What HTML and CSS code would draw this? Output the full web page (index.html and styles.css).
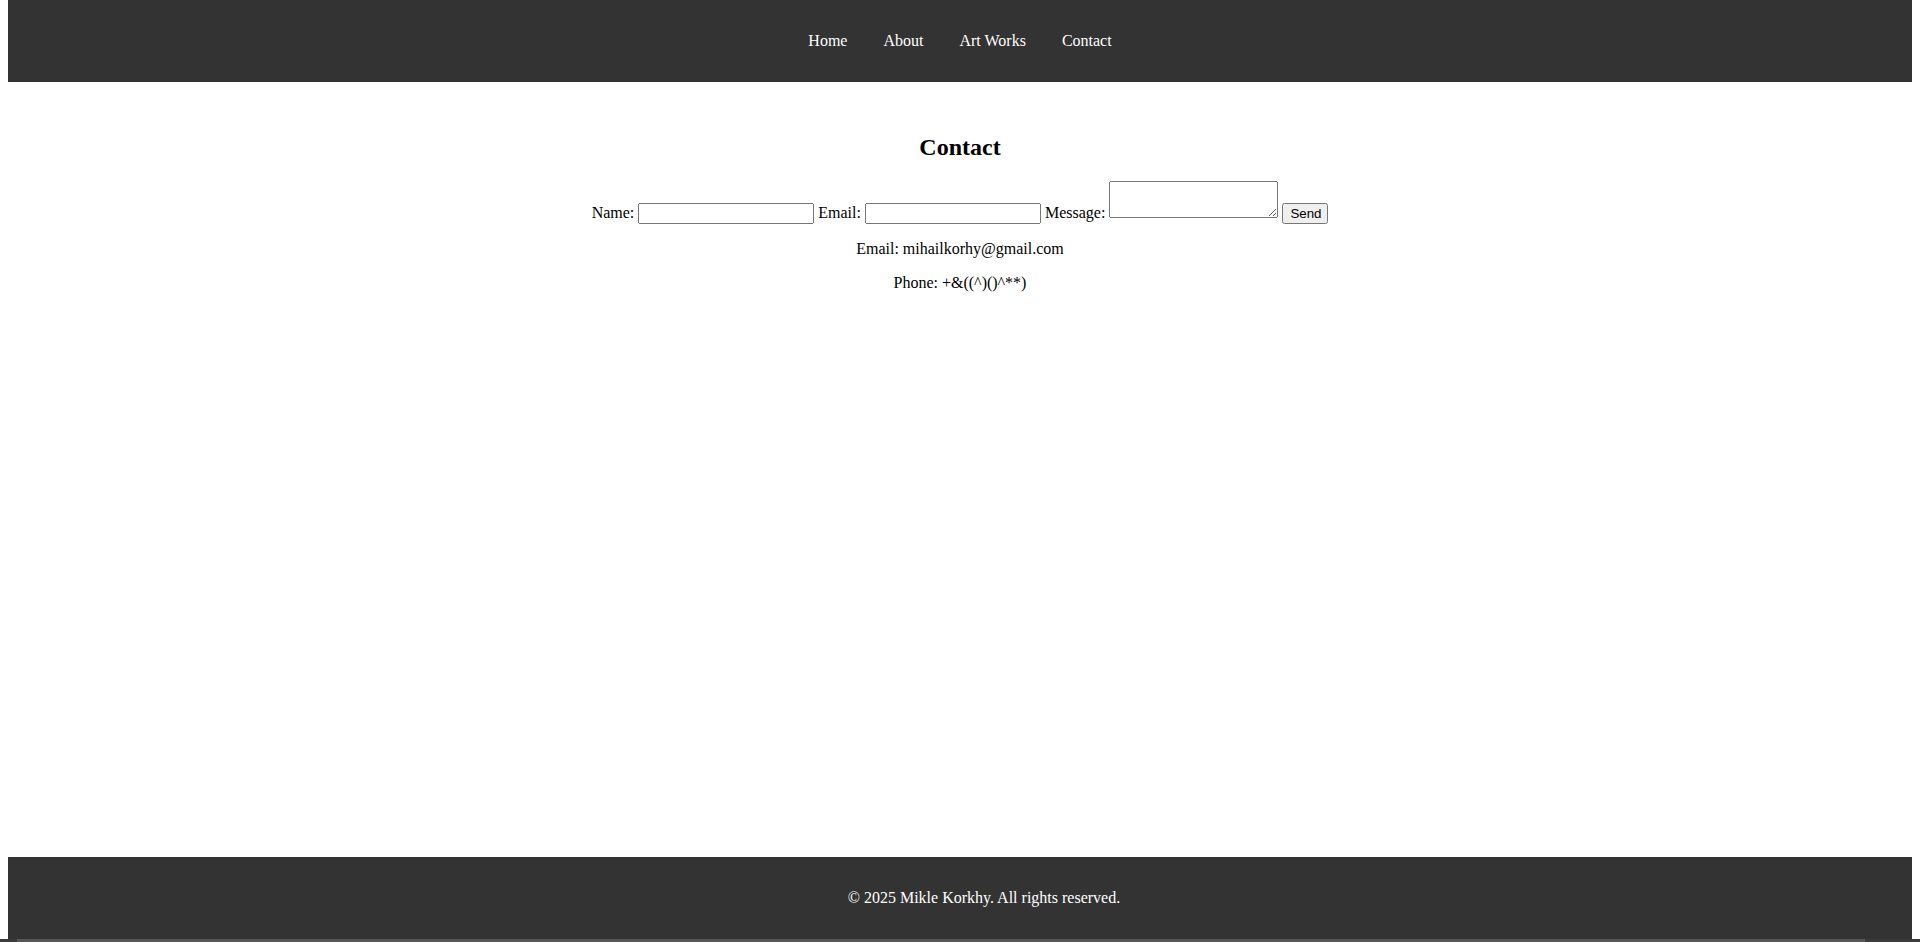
FILE: index.html
```html
<!DOCTYPE html>
<html lang="en">
<head>
<meta charset="utf-8">
<title>Contact</title>
<link rel="stylesheet" href="styles.css">
</head>
<body>
<header class="site-header">
  <nav class="nav">
    <a href="#" class="nav-link">Home</a>
    <a href="#" class="nav-link">About</a>
    <a href="#" class="nav-link">Art Works</a>
    <a href="#" class="nav-link">Contact</a>
  </nav>
</header>
<main class="content">
  <h2 class="title">Contact</h2>
  <form class="contact-form">
    <label>Name:</label> <input type="text" class="field"> <label>Email:</label> <input type="email" class="field"> <label>Message:</label> <textarea class="message"></textarea> <button type="button" class="send">Send</button>
  </form>
  <p class="info">Email: mihailkorhy@gmail.com</p>
  <p class="info">Phone: +&amp;((^)()^**)</p>
</main>
<footer class="site-footer">
  <p class="copy">© 2025 Mikle Korkhy. All rights reserved.</p>
</footer>
<div class="hscroll"><div class="hscroll-thumb"></div></div>
</body>
</html>
```

FILE: styles.css
```css
html {
  overflow-x: hidden;
}
body {
  margin: 0 8px;
  min-height: 100vh;
  padding-bottom: 3px;
  box-sizing: border-box;
  display: flex;
  flex-direction: column;
  font-family: "Liberation Serif", "Times New Roman", serif;
  font-size: 16px;
  color: #000;
  background: #fff;
}
.site-header {
  background: #333;
  height: 82px;
  display: flex;
  align-items: center;
  justify-content: center;
}
.nav {
  display: flex;
  gap: 36px;
}
.nav-link {
  color: #fff;
  text-decoration: none;
}
.content {
  padding: 32px 0;
  text-align: center;
}
.title {
  font-size: 24px;
  font-weight: bold;
  margin: 20px 0;
}
.contact-form {
  margin: 0;
}
.field,
.message,
.send {
  font-family: "Liberation Sans", Arial, sans-serif;
  font-size: 13.333px;
  box-sizing: border-box;
}
.field {
  width: 176px;
  height: 21px;
  padding: 1px 2px;
}
.message {
  width: 169px;
  height: 37px;
  padding: 2px;
  margin: 0;
}
.send {
  width: 46px;
  height: 21px;
  padding: 1px 6px;
}
.info {
  margin: 16px 0;
}
.site-footer {
  margin-top: auto;
  background: #333;
  color: #fff;
  width: 100%;
  padding: 0 24px;
  box-sizing: content-box;
  height: 82px;
  display: flex;
  align-items: center;
  justify-content: center;
}
.copy {
  margin: 0;
}
.hscroll {
  position: fixed;
  left: 0;
  right: 0;
  bottom: 0;
  height: 3px;
  background: #3b3b3b;
}
.hscroll-thumb {
  position: absolute;
  left: 17px;
  width: 1848px;
  top: 0;
  bottom: 0;
  background: #575757;
}
```
